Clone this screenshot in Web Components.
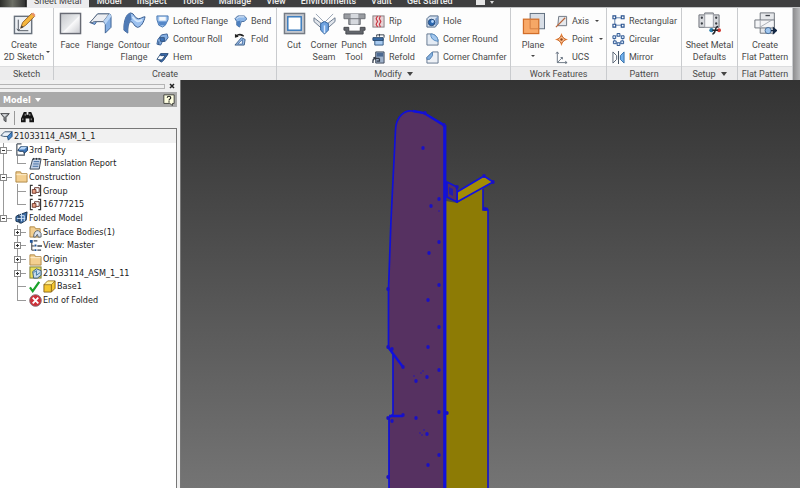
<!DOCTYPE html>
<html lang="en">
<head>
<meta charset="utf-8">
<title>Sheet Metal</title>
<style>
  html, body { height: 100%; }
  body { margin: 0; }
</style>
</head>
<body>
<cad-app></cad-app>

<script>
const ICONS = {
  sketch: ['0 0 24 24', `<rect x="1.500" y="4.500" width="18" height="18" fill="#eef1f5" stroke="#69727d" stroke-width="1.500"/><path d="M5.500 8v11.500H16M4 17.500l1.500 2L7 18" fill="none" stroke="#4d545c"/><path d="M8 17l2-6L19.500 1.500l3 3L13 14z" fill="#f6b63c" stroke="#91602a"/><path d="M19 2l3 3 1.500-2-2.500-2.500z" fill="#e8926b"/><path d="M8 17l1-3 2 2z" fill="#333"/>`],
  face: ['0 0 24 24', `<defs><linearGradient id="g" x2="1" y2="1"><stop stop-color="#c4c6ca"/><stop offset=".5" stop-color="#e6e8ea"/><stop offset=".55" stop-color="#f9f9fa"/><stop offset="1" stop-color="#c6c8cd"/></linearGradient></defs><rect x="1.500" y="1.500" width="21" height="21" fill="url(#g)" stroke="#686b74" stroke-width="1.500"/>`],
  flange: ['0 0 24 24', `<path d="M1 11L9 2h12q2 0 2 3v11l-6 6v-9q0-3-3-3H8l-2 3z" fill="#85afe3" stroke="#3b5f92"/><path d="M1 11L9 2h12l-6 8H6q-2 0-2 1z" fill="#eceef2" stroke="#5d6c80"/><path d="M15 10l6-8q2 0 2 3l-6 8q0-2-2-3z" fill="#b8d4f5"/>`],
  contour: ['0 0 24 24', `<path d="M1 14C2 6 4 2 8 1c4 0 4 6 8 6 3 0 4-2 7-2-1 5-4 11-8 11-4-1-4-6-7-6-3 2-3 6-3 12l-4-3z" fill="#9cc1ef" stroke="#34588b"/><path d="M1 14C2 6 4 2 8 1l1 7C6 10 5 15 5 22l-4-3z" fill="#4f7ab5"/><path d="M10 5c3 5 6 6 10 3" stroke="#d5e8fc" stroke-width="2" fill="none"/>`],
  lofted: ['0 0 14 14', `<path d="M1 1h12v4l-3 6-3 2-4-2-2-6z" fill="#9fc3ee" stroke="#4474ad"/><path d="M3.500 2h7v4h-7z" fill="#f5f8fb"/><path d="M2 7l2 4h6l2-4z" fill="#5688c8"/>`],
  roll: ['0 0 14 14', `<path d="M1 12l1-5 4-5 6-1 1 4-3 4H7l-2 4z" fill="#86afe2" stroke="#385f96"/><path d="M4 5h5v4H5zM3 9v4" fill="#3c73b9" stroke="#31527e"/>`],
  hem: ['0 0 14 14', `<path d="M1 9L5 3h8l-5 7z" fill="#fff" stroke="#32557f"/><path d="M5 3h8L8 10l-2 2-3-2h3l4-5H5z" fill="#4075bc" stroke="#284773"/>`],
  bend: ['0 0 14 14', `<path d="M1 4l3-3h7l3 3-3 3H8L6 13l-3-2V7z" fill="#8db7e8" stroke="#466c9e"/><path d="M3 7l4-1-1 7-3-2z" fill="#4c7fbf"/><path d="M3 4l2-2h6" fill="none" stroke="#f0f6ff"/>`],
  fold: ['0 0 14 14', `<path d="M8 5l4 2-1 6H1z" fill="#98bbe6" stroke="#3d5d85"/><path d="M4 12l5-5v5z" fill="#fff" stroke="#456da2"/><path d="M1 5V1l2 1c3-2 6-1 8 1l-1 1C8 3 6 2 4 3l1 1z" fill="#222"/>`],
  cut: ['0 0 24 24', `<rect x="1.500" y="1.500" width="21" height="21" fill="#c3c7ce" stroke="#757b84" stroke-width="1.500"/><rect x="5" y="5" width="14" height="14" fill="#fff" stroke="#377abd" stroke-width="1.500"/>`],
  seam: ['0 0 24 24', `<path d="M1 6l9 7v5L1 10zM23 6l-9 7v5l9-8z" fill="#e1e5eb" stroke="#69788d"/><path d="M3 2l9 9 9-9" fill="none" stroke="#98a4b4"/><path d="M8 12l4-2 4 2v7l-4 4-4-4z" fill="#6fa3e0" stroke="#2f609b"/><path d="M12 14v8" stroke="#dbeaff" stroke-width="1.500"/>`],
  punch: ['0 0 24 24', `<path d="M1 2h22v5h-5v6H6V7H1z" fill="#999ca1" stroke="#6d7076"/><path d="M8 2h8v11H8z" fill="#d6d9de"/><path d="M6 7h12" stroke="#707379"/><path d="M1 16h5v4h12v-4h5v3h-2v4H3v-4H1z" fill="#62666c" stroke="#47494e"/>`],
  rip: ['0 0 14 14', `<rect x="1" y="1" width="12" height="12" fill="#e8d3d5" stroke="#817a7f"/><path d="M6 1L4.500 4 6 7l-1.500 3L6 13M9 1L8 4l1.500 3L8 10l1 3" fill="#fff" stroke="#c93541" stroke-width="1.300"/>`],
  unfold: ['0 0 14 14', `<path d="M3 6h9v7H3z" fill="#a7c9ef" stroke="#2f5480"/><path d="M1 5h11v3H1z" fill="#396ca7" stroke="#254469"/><path d="M5 4V2h8v3M8 1v3" fill="none" stroke="#303a48"/>`],
  refold: ['0 0 14 14', `<path d="M4 1h9v12H4z" fill="#9fb2cb" stroke="#3b4656"/><path d="M5 2h7v4H5z" fill="#4c6991"/><path d="M8 8H4q-3 0-3 3v2M8 8v3H5" fill="none" stroke="#333b49" stroke-width="1.400"/><path d="M1 7l3-1v4z" fill="#333b49"/>`],
  hole: ['0 0 14 14', `<path d="M1 4l3-3h9v8l-3 4H1z" fill="#d5e1f0" stroke="#456080"/><path d="M10 4l3-3v8l-3 4z" fill="#7b9cc8"/><circle cx="6" cy="8" r="3.500" fill="#2c69b2" stroke="#274b79"/><circle cx="7" cy="7" r="1.500" fill="#b6d7fc"/>`],
  round: ['0 0 14 14', `<path d="M1 1h4c5 0 8 4 8 8v4H1z" fill="#e4ebf4" stroke="#60748c"/><path d="M5 1q0 7 8 8c0-4-3-8-8-8" fill="#a3c7ee" stroke="#5389be"/>`],
  chamfer: ['0 0 14 14', `<path d="M1 7l6-6h6v12H1z" fill="#eef1f6" stroke="#60748c"/><path d="M1 7l6-6v4L4 9H1z" fill="#86b1e0" stroke="#5382b3"/>`],
  plane: ['0 0 24 24', `<rect x="8.500" y="1.500" width="15" height="16" fill="#d8dee6" stroke="#5e6c7d"/><rect x="1.500" y="7.500" width="16" height="15" fill="#f8a25b" fill-opacity=".92" stroke="#d16d28" stroke-width="1.300"/><path d="M8.500 7.500v10h9" fill="none" stroke="#d88245"/>`],
  axis: ['0 0 14 14', `<path d="M4 1.500h8.500v10H3z" fill="#e6e9ed" stroke="#6b7480"/><path d="M1 13L11 3" stroke="#b9653a" stroke-width="1.300"/>`],
  point: ['0 0 14 14', `<path d="M7 0l2 5 5 2-5 2-2 5-2-5-5-2 5-2z" fill="#e8843b"/><path d="M7 3l4 4-4 4-4-4z" fill="#ffc18f" stroke="#b85a20"/><circle cx="7" cy="7" r="1.300" fill="#8e4319"/>`],
  ucs: ['0 0 14 14', `<path d="M2.500 1v11.500H13M2.500 12.500L8 7M1 3l1.500-2L4 3M11 11l2 1.500-2 1M6 7h2v2" fill="none" stroke="#66717f"/>`],
  rect: ['0 0 14 14', `<path d="M3 3h8M3 3v8M3 11h8" stroke="#597aaa" fill="none"/><path d="M1 1h3v3H1zM10 1h3v3h-3zM1 10h3v3H1zM10 10h3v3h-3z" fill="#fff" stroke="#26508e" stroke-width="1.200"/>`],
  circ: ['0 0 14 14', `<circle cx="7" cy="7" r="4.500" fill="none" stroke="#8dabd1"/><g fill="#d9e7f8" stroke="#26508e"><path d="M5.500 .5h3v3h-3zM10 3h3v3h-3zM9.500 8.500h3v3h-3zM5.500 10.500h3v3h-3zM1.500 8.500h3v3h-3zM1 3h3v3H1z"/></g>`],
  mirror: ['0 0 14 14', `<path d="M1 1l4 4v4l-4 4z" fill="#fff" stroke="#536071"/><path d="M7 0v14" stroke="#374656"/><path d="M13 1L9 5v4l4 4z" fill="#72b0ec" stroke="#336da8"/>`],
  defaults: ['0 0 24 24', `<path d="M1 3h6V1h9v2h6v13H1z" fill="#d7d9dd" stroke="#6c7078"/><path d="M7 2h9v14H7z" fill="#f7f8f9" stroke="#999ca3"/><g fill="#3b3f45"><circle cx="4" cy="6" r="1.200"/><circle cx="19" cy="6" r="1.200"/><circle cx="4" cy="12" r="1.200"/><circle cx="19" cy="12" r="1.200"/></g><circle cx="14" cy="19" r="2.200" fill="#2a7fae"/><circle cx="22" cy="19" r="2" fill="#d23c35"/><path d="M15 23c4 0 2-8 6-8M15 19h6" fill="none" stroke="#23262b" stroke-width="1.500"/>`],
  flat: ['0 0 26 26', `<path d="M7 1h16v23H7z" fill="#e6e8eb" stroke="#656a73"/><path d="M1 9h22v9H1z" fill="#f4f5f7" stroke="#656a73"/><path d="M7 9v9M7 17L22 8" stroke="#a2a7af"/><path d="M13 4h5" stroke="#41454c" stroke-width="1.500"/><circle cx="16" cy="21" r="3.500" fill="#9fc6ef" stroke="#3e648f"/><path d="M19 21h6M22 18l3.500 3-3.500 3z" fill="#142744" stroke="#142744" stroke-width="1.500"/>`],
  part: ['0 0 14 14', `<path d="M1 7l4-4h8l-4 5H4z" fill="#e9f0f8" stroke="#3d556f"/><path d="M8 8l5-5v5l-4 4z" fill="#4686c8" stroke="#244e7c"/>`],
  party: ['0 0 14 14', `<path d="M2 1h5M2 1v12h8v-3" fill="none" stroke="#4a545f" stroke-width="1.300"/><path d="M3 8l3-4h7.500v4L10 11l-1-2H5z" fill="#3f77b8" stroke="#1c3a5e"/><path d="M4 7l3-3h6l-3 3z" fill="#b9d6f5"/>`],
  report: ['0 0 14 14', `<path d="M4 2h9l-2 11H1z" fill="#c5d3e8" stroke="#34404f"/><path d="M5 5h6M4.500 7.500h6M4 10h6" stroke="#39659c"/><path d="M5 1v2M8 1v2M11 1v2" stroke="#222"/>`],
  folder: ['0 0 14 14', `<path d="M1 3V2h5l1 2h6v9H1z" fill="#f3cf90" stroke="#ad8643"/><path d="M1.500 5h11" stroke="#fff0cf"/>`],
  group: ['0 0 14 14', `<path d="M4 1.500H1.500v11H4M10 1.500h2.500v11H10" fill="none" stroke="#333" stroke-width="1.200"/><path d="M6 4h5v5H6z" fill="#fff" stroke="#612f25"/><path d="M3.500 6h4v4h-4z" fill="#e9a184" stroke="#73392c"/>`],
  folded: ['0 0 14 14', `<path d="M1 6l3-2v8l-3-1zM5 4l8-3-1 9-5 3H5z" fill="#3e6fa8" stroke="#142e4c"/><path d="M5 5h5v6M7 2v9M2 8h9" fill="none" stroke="#cfe2f6"/>`],
  bodies: ['0 0 14 14', `<path d="M1 2h5l1 2h5v9H1z" fill="#f3cf90" stroke="#ad8643"/><path d="M5 13q0-7 5-7l3 3v4h-3l-1-3-2 3z" fill="#dbe2ec" stroke="#56606c"/>`],
  view: ['0 0 14 14', `<path d="M3 3v9M3 7.500h3M3 12h3" stroke="#333" fill="none"/><path d="M1 1h3v3H1zM6 6h2v2H6zM6 11h2v2H6z" fill="#205599"/><path d="M5 2h4M9 7.500h5M9 12h4" stroke="#3c4550" stroke-width="1.500"/>`],
  derived: ['0 0 14 14', `<rect x="1" y="1" width="12" height="12" fill="#eadf5a" stroke="#777832"/><path d="M4 6l4-3 5 2v5l-4 3H5z" fill="#c8ddec" stroke="#355a7c"/><path d="M5 7l3-2v5l4-3" fill="none" stroke="#3877a5"/>`],
  check: ['0 0 14 14', `<path d="M1 8l3 4 7-10" fill="none" stroke="#19a229" stroke-width="2.400"/>`],
  box: ['0 0 14 14', `<path d="M1 5l4-4h8v8l-4 4H1z" fill="#f5c72e" stroke="#89661b"/><path d="M1 5h8v8M9 5l4-4" fill="none" stroke="#89661b"/><path d="M2 4.500l3-3h7l-3 3z" fill="#fff2a2"/>`],
  end: ['0 0 14 14', `<circle cx="7" cy="7" r="6.300" fill="#ce3038" stroke="#88747a"/><path d="M4 4l6 6M10 4l-6 6" stroke="#fff" stroke-width="2"/>`],
  filter: ['0 0 14 14', `<path d="M1 1.500h12L8.500 7v6l-3-2V7z" fill="#8b8e92" stroke="#27292c"/><path d="M3 2.500h7L6.500 6z" fill="#dcdee0"/>`],
  find: ['0 0 14 14', `<path d="M3 1h3v3h2V1h3l3 7v4H9V8H5v4H0V8z" fill="#151515"/><path d="M2 8v2M11 8v2M4.500 3v2M9.500 3v2" stroke="#bbb"/>`],
  help: ['0 0 14 14', `<path d="M1 1h12v10h-2v2.500L8 11H1z" fill="#ffffe1" stroke="#32332e"/><path d="M5 4.500C5 2 9 2 9 4.500 9 6 7 6 7 7.500M7 8.500V10" fill="none" stroke="#222" stroke-width="1.400"/>`]
};

customElements.define('ui-icon', class extends HTMLElement {
  connectedCallback() {
    const [box, art] = ICONS[this.getAttribute('name')];
    this.attachShadow({ mode: 'open' }).innerHTML = `
      <style>:host{display:block;flex:none;width:13px;height:13px} svg{display:block;width:100%;height:100%}</style>
      <svg viewBox="${box}" aria-hidden="true">${art}</svg>`;
  }
});

customElements.define('tool-button', class extends HTMLElement {
  connectedCallback() {
    const menu = this.getAttribute('menu');
    this.attachShadow({ mode: 'open' }).innerHTML = `
      <style>
        :host{display:block;min-width:0}
        button{all:unset;box-sizing:border-box;display:flex;align-items:center;gap:4px;height:18px;white-space:nowrap;cursor:default}
        .caret{border:2px solid transparent;border-top-color:#444;border-bottom:0;margin-left:2px}
        :host([large]) button{position:relative;flex-direction:column;gap:4px;width:100%;height:auto;line-height:12px;text-align:center}
        :host([large]) ui-icon{width:23px;height:23px}
        :host([large]) .caret{margin:0}
        :host([menu=side]) .caret{position:absolute;right:-2px;top:39px}
        button:focus-visible{outline:1px dotted #456}
      </style>
      <button type="button"><ui-icon name="${this.getAttribute('icon')}"></ui-icon><span><slot></slot></span>${menu !== null ? '<i class="caret"></i>' : ''}</button>`;
  }
});

customElements.define('ribbon-panel', class extends HTMLElement {
  connectedCallback() {
    this.attachShadow({ mode: 'open' }).innerHTML = `
      <style>
        :host{display:flex;flex-direction:column;min-width:0;box-sizing:border-box;border-right:1px solid #c9cbce;background:#fdfdfd}
        .body{flex:1;display:flex;align-items:flex-start;padding:4px 0 0 var(--inset,0)}
        h2{margin:0;height:14px;font:inherit;line-height:14px;background:#ececed;border-top:1px solid #dcdddf;display:flex;justify-content:center;align-items:center;gap:5px;white-space:nowrap}
        .caret{border:3px solid transparent;border-top:4px solid #444;border-bottom:0}
      </style>
      <div class="body"><slot></slot></div>
      <h2>${this.getAttribute('label')}${this.hasAttribute('menu') ? '<i class="caret"></i>' : ''}</h2>`;
  }
});

customElements.define('ribbon-tabs', class extends HTMLElement {
  connectedCallback() {
    this.attachShadow({ mode: 'open' }).innerHTML = `
      <style>
        :host{display:flex;align-items:flex-end;gap:1px;height:8px;overflow:hidden;background:linear-gradient(#3f3f40 7px,#c4c5c7 7px);color:#eee;font-weight:500}
        .app{width:26px;height:7px;align-self:flex-start;box-sizing:border-box;background:linear-gradient(90deg,#2d2e2a,#6d6f66 50%,#333);border-right:1px solid #222}
        a{color:inherit;text-decoration:none;line-height:12px;padding:0 7px 1px;white-space:nowrap}
        a[aria-current]{background:#ececee;color:#444;font-weight:400}
        .rec{width:9px;height:5px;margin:0 4px 3px 15px;background:#e6e6e6}
        .caret{border:2px solid transparent;border-top:3px solid #ddd;border-bottom:0;margin-bottom:4px}
      </style>
      <span class="app"></span>
      <a href="#" aria-current="page">Sheet Metal</a><a href="#">Model</a><a href="#">Inspect</a><a href="#">Tools</a><a href="#">Manage</a><a href="#">View</a><a href="#">Environments</a><a href="#">Vault</a><a href="#">Get Started</a>
      <i class="rec"></i><i class="caret"></i>`;
  }
});

customElements.define('tool-ribbon', class extends HTMLElement {
  connectedCallback() {
    this.attachShadow({ mode: 'open' }).innerHTML = `
      <style>
        :host{display:grid;grid-template-columns:54fr 223fr 234fr 96fr 75fr 56fr 55fr 7fr;height:71px;border-bottom:1px solid #6a6a6b;color:#4a4a4a}
        .col{display:grid}
        .end{background:linear-gradient(90deg,#8d8d8f,#b9babc)}
        .w28{width:28px}.w32{width:32px}.w36{width:36px}.w48{width:48px}
        .c1{margin-left:4px;width:78px}.c2{margin-left:2px;width:54px}.c3{margin-left:8px}
        .fill{flex:1}
      </style>
      <ribbon-panel label="Sketch"><tool-button class="w48" large menu="side" icon="sketch">Create<br>2D Sketch</tool-button></ribbon-panel>
      <ribbon-panel label="Create" style="--inset:2px">
        <tool-button class="w28" large icon="face">Face</tool-button>
        <tool-button class="w32" large icon="flange">Flange</tool-button>
        <tool-button class="w36" large icon="contour">Contour<br>Flange</tool-button>
        <div class="col c1"><tool-button icon="lofted">Lofted Flange</tool-button><tool-button icon="roll">Contour Roll</tool-button><tool-button icon="hem">Hem</tool-button></div>
        <div class="col"><tool-button icon="bend">Bend</tool-button><tool-button icon="fold">Fold</tool-button></div>
      </ribbon-panel>
      <ribbon-panel label="Modify" menu style="--inset:1px">
        <tool-button class="w32" large icon="cut">Cut</tool-button>
        <tool-button class="w28" large icon="seam">Corner<br>Seam</tool-button>
        <tool-button class="w32" large icon="punch">Punch<br>Tool</tool-button>
        <div class="col c2"><tool-button icon="rip">Rip</tool-button><tool-button icon="unfold">Unfold</tool-button><tool-button icon="refold">Refold</tool-button></div>
        <div class="col"><tool-button icon="hole">Hole</tool-button><tool-button icon="round">Corner Round</tool-button><tool-button icon="chamfer">Corner Chamfer</tool-button></div>
      </ribbon-panel>
      <ribbon-panel label="Work Features" style="--inset:8px">
        <tool-button class="w28" large menu="below" icon="plane">Plane</tool-button>
        <div class="col c3"><tool-button menu="inline" icon="axis">Axis</tool-button><tool-button menu="inline" icon="point">Point</tool-button><tool-button icon="ucs">UCS</tool-button></div>
      </ribbon-panel>
      <ribbon-panel label="Pattern" style="--inset:5px">
        <div class="col"><tool-button icon="rect">Rectangular</tool-button><tool-button icon="circ">Circular</tool-button><tool-button icon="mirror">Mirror</tool-button></div>
      </ribbon-panel>
      <ribbon-panel label="Setup" menu><tool-button class="fill" large icon="defaults">Sheet Metal<br>Defaults</tool-button></ribbon-panel>
      <ribbon-panel label="Flat Pattern"><tool-button class="fill" large icon="flat">Create<br>Flat Pattern</tool-button></ribbon-panel>
      <span class="end"></span>`;
  }
});

customElements.define('tree-row', class extends HTMLElement {
  connectedCallback() {
    // guides: one letter per indent level — t tee, l corner, i line, + / - expander, space for nothing
    const last = this.hasAttribute('last');
    const guides = [...(this.getAttribute('guides') || '')].map(g => {
      const down = 'ti+-'.includes(g), across = 'tl+-'.includes(g), box = '+-'.includes(g);
      return `<span class="guide">${g !== ' ' ? `<i class="v ${down && !(last && box) ? '' : 'half'}"></i>` : ''}${across ? '<i class="h"></i>' : ''}${box ? `<b class="box ${g === '+' ? 'plus' : ''}"></b>` : ''}</span>`;
    }).join('');
    const icons = this.getAttribute('icons').split(' ').map(n => `<ui-icon name="${n}"></ui-icon>`).join('');
    this.attachShadow({ mode: 'open' }).innerHTML = `
      <style>
        :host{display:flex;align-items:center;gap:1px;white-space:nowrap}
        .guides{display:flex;align-self:stretch}
        .guides:empty{display:none}
        .guide{position:relative;width:14px}
        .v{position:absolute;left:3px;top:0;bottom:0;width:1px;background:#999}
        .v.half{bottom:50%}
        .h{position:absolute;left:3px;top:50%;width:9px;height:1px;background:#999}
        .box{position:absolute;left:0;top:calc(50% - 3px);width:7px;height:7px;box-sizing:border-box;border:1px solid #8a8a8a;background:linear-gradient(#333,#333) center/3px 1px no-repeat #fff}
        .box.plus{background:linear-gradient(#333,#333) center/3px 1px no-repeat,linear-gradient(#333,#333) center/1px 3px no-repeat #fff}
      </style>
      <span class="guides">${guides}</span>${icons}<span><slot></slot></span>`;
    this.setAttribute('role', 'treeitem');
  }
});

customElements.define('model-browser', class extends HTMLElement {
  connectedCallback() {
    this.attachShadow({ mode: 'open' }).innerHTML = `
      <style>
        :host{display:flex;flex-direction:column;box-sizing:border-box;padding-right:3px;background:#f0f0f0;border-right:1px solid #777;color:#222;font:9px "DejaVu Sans Condensed","DejaVu Sans",sans-serif}
        .grip{display:flex;align-items:center;gap:3px;height:12px;padding-right:1px}
        .grip i{flex:1;height:3px;border:solid #b5b5b5;border-width:1px 1px 1px 0}
        button{all:unset;cursor:default}
        .close{width:8px;height:8px}
        svg{display:block;width:100%;height:100%}
        header{display:flex;align-items:center;height:15px;padding:0 2px 0 3px;background:#a9a9a9;color:#fff}
        .title{flex:1;display:flex;align-items:center;gap:4px;font-weight:700}
        .caret{border:3px solid transparent;border-top:4px solid #fff;border-bottom:0}
        .help ui-icon{width:12px;height:12px}
        .bar{display:flex;align-items:center;gap:4px;height:21px}
        .bar i{width:1px;height:14px;background:#999;margin-right:2px}
        .filter ui-icon{width:10px;height:11px}
        .tree{flex:1;background:#fff;border:solid #777;border-width:1px 1px 0 0}
        .rows{display:grid;grid-auto-rows:1fr;height:178px}
        .root{background:#f1f1f1}
      </style>
      <div class="grip"><i></i><button class="close" type="button" aria-label="Close"><svg viewBox="0 0 8 8"><path d="M2 2l4 4M6 2L2 6" stroke="#222" stroke-width="1.500"/></svg></button></div>
      <header><button class="title" type="button">Model<i class="caret"></i></button><button class="help" type="button" aria-label="Help"><ui-icon name="help"></ui-icon></button></header>
      <div class="bar"><button class="filter" type="button" aria-label="Filter"><ui-icon name="filter"></ui-icon></button><i></i><button type="button" aria-label="Find"><ui-icon name="find"></ui-icon></button></div>
      <div class="tree"><div class="rows" role="tree">
        <tree-row class="root" icons="part">21033114_ASM_1_1</tree-row>
        <tree-row guides="-" icons="party">3rd Party</tree-row>
        <tree-row guides="il" icons="report">Translation Report</tree-row>
        <tree-row guides="-" icons="folder">Construction</tree-row>
        <tree-row guides="it" icons="group">Group</tree-row>
        <tree-row guides="il" icons="group">16777215</tree-row>
        <tree-row guides="-" last icons="folded">Folded Model</tree-row>
        <tree-row guides=" +" icons="bodies">Surface Bodies(1)</tree-row>
        <tree-row guides=" +" icons="view">View: Master</tree-row>
        <tree-row guides=" +" icons="folder">Origin</tree-row>
        <tree-row guides=" +" icons="derived">21033114_ASM_1_11</tree-row>
        <tree-row guides=" t" icons="check box">Base1</tree-row>
        <tree-row guides=" l" icons="end">End of Folded</tree-row>
      </div></div>`;
    // the expander column's line is drawn whole from the first row to the last branch
    for (const row of this.shadowRoot.querySelectorAll('tree-row')) row.setAttribute('aria-level', (row.getAttribute('guides') || '').length + 1);
  }
});

customElements.define('part-view', class extends HTMLElement {
  connectedCallback() {
    const marks = [[423,148],[439,199],[431,206],[439,242],[429,253],[439,285],[428,300],[439,327],[428,347],[388,289],[388,347],[392,349],[403,367],[439,370],[427,377],[416,381],[439,412],[447,413],[403,415],[388,418],[416,418],[392,421],[427,434],[439,455],[428,465],[388,477],[493,182],[485,209],[484,176],[457,187],[425,113],[444,125]];
    const specks = [[439,211],[414,376],[421,373],[423,371],[420,433],[422,435],[424,430]];
    this.attachShadow({ mode: 'open' }).innerHTML = `
      <style>:host{display:block;min-width:0;overflow:hidden;background:linear-gradient(#333,#747474)} svg{display:block;width:100%;height:100%}</style>
      <svg viewBox="181 80 619 408" preserveAspectRatio="xMidYMin slice" role="img" aria-label="Sheet metal part">
        <path d="M446 201L457 203L483 187V210H488V500H446z" fill="#8d7b05"/>
        <path d="M483 189V210H488V500" fill="none" stroke="#1111cf" stroke-width="1.600"/>
        <path d="M457 192L484 176L493 182L457 202z" fill="#a38c05" stroke="#1111e0" stroke-width="1.800" stroke-linejoin="round"/>
        <path d="M447 182L457 187V202L447 197z" fill="#533061" stroke="#1111d8" stroke-width="1.600"/>
        <path d="M449 187l4 2v7l-4-2z" fill="#221daf"/>
        <path d="M395.500 130C396 116 405 110 412 111L424 113L444.500 126V500H389V417L393 414V354L388.500 347V289L391 220z" fill="#563161"/>
        <path d="M389 500V418L393 414V354L388.500 347V289L391 220L395.500 130C396 116 405 110 412 111L424 113L444.500 126" fill="none" stroke="#1010d8" stroke-width="1.700"/>
        <path d="M444.800 125V500" stroke="#1010dd" stroke-width="3.200"/>
        <path d="M388 347L403 367M389 416h14M413 111l11 2 20 12M484 209h4" fill="none" stroke="#1010dd" stroke-width="2.300"/>
        <g fill="#1a10c5">${marks.map(([x, y]) => `<ellipse cx="${x}" cy="${y}" rx="1.700" ry="2"/>`).join('')}${specks.map(([x, y]) => `<circle cx="${x}" cy="${y}" r=".7"/>`).join('')}</g>
      </svg>`;
  }
});

customElements.define('cad-app', class extends HTMLElement {
  connectedCallback() {
    this.attachShadow({ mode: 'open' }).innerHTML = `
      <style>
        :host{display:flex;flex-direction:column;min-height:100vh;font:9px Roboto,"Open Sans",sans-serif}
        main{flex:1;display:grid;grid-template-columns:181px minmax(0,1fr);min-height:0}
        part-view{height:100%;min-height:0;contain:size}
      </style>
      <ribbon-tabs></ribbon-tabs>
      <tool-ribbon></tool-ribbon>
      <main><model-browser></model-browser><part-view></part-view></main>`;
  }
});
</script>
</body>
</html>
